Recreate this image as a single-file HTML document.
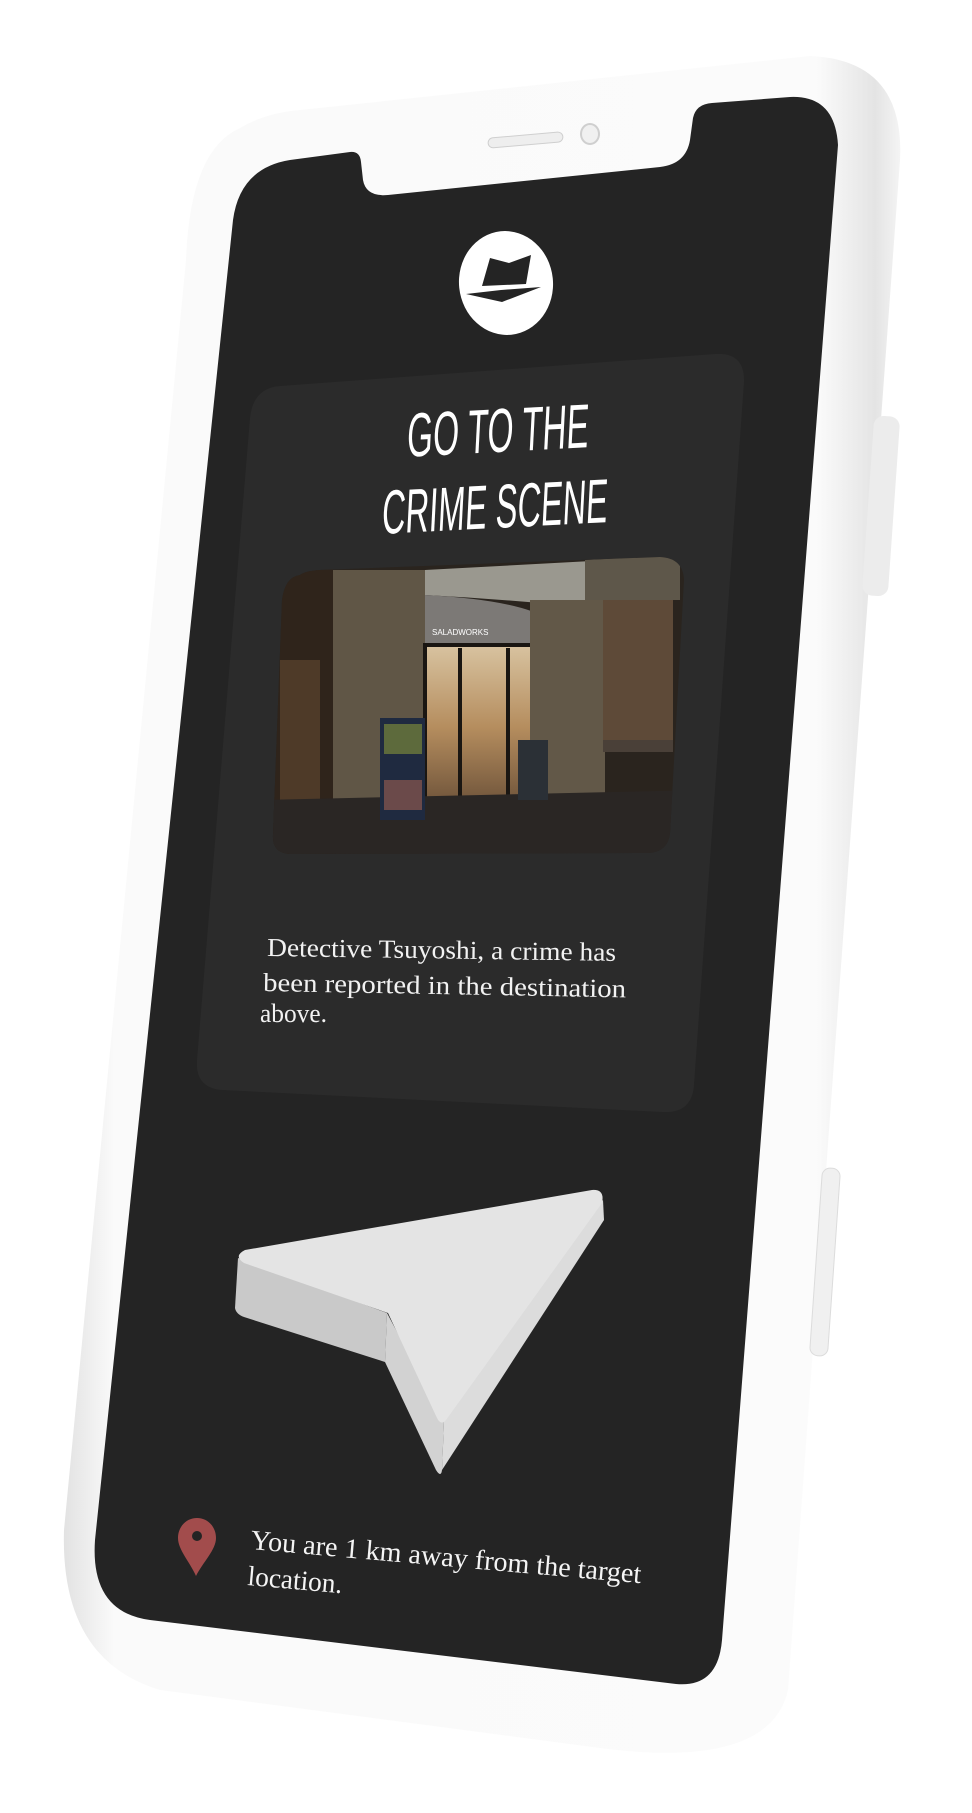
<!DOCTYPE html>
<html><head><meta charset="utf-8"><style>
html,body{margin:0;padding:0;background:#fff;width:972px;height:1813px;overflow:hidden}
svg{display:block}
</style></head><body>
<svg width="972" height="1813" viewBox="0 0 972 1813" xmlns="http://www.w3.org/2000/svg">
<defs>
<linearGradient id="body" x1="0" y1="0" x2="1" y2="0">
<stop offset="0" stop-color="#e2e2e2"/><stop offset="0.06" stop-color="#fafafa"/><stop offset="0.9" stop-color="#fbfbfb"/><stop offset="0.97" stop-color="#e4e4e4"/><stop offset="1" stop-color="#f4f4f4"/>
</linearGradient>
<linearGradient id="glow" x1="0" y1="0" x2="0" y2="1">
<stop offset="0" stop-color="#d8c3a0"/><stop offset="0.5" stop-color="#b58d5e"/><stop offset="1" stop-color="#6a5038"/>
</linearGradient>
<clipPath id="photo"><path d="M300 575 Q305 571 320 570 L660 557 Q683 558 684 580 L670 833 Q668 852 648 853 L290 854 Q272 853 273 835 L282 600 Q285 577 300 575 Z"/></clipPath>
</defs>

<path d="M240 128 Q190 150 186 260 L64 1530 Q60 1660 160 1690 L600 1748 Q770 1770 788 1690 L900 160 Q905 60 810 56 L300 110 Q265 113 240 128 Z" fill="url(#body)"/>
<rect x="868" y="416" width="26" height="180" rx="10" fill="#ececec" transform="rotate(4 881 506)"/>
<rect x="816" y="1168" width="18" height="188" rx="8" fill="#f0f0f0" stroke="#dcdcdc" transform="rotate(4 825 1262)"/>

<path d="M290 160 L350 152 Q360 151 361 162 L363 180 Q366 197 388 195 L660 167 Q686 164 690 140 L693 118 Q696 104 712 103 L790 97 Q835 95 838 145 L722 1640 Q718 1688 676 1684 L150 1620 Q90 1612 95 1540 L233 220 Q240 168 290 160 Z" fill="#242424"/>
<rect x="488" y="135" width="75" height="10" rx="5" fill="#eeeeee" stroke="#cfcfcf" transform="rotate(-5 525 140)"/>
<ellipse cx="590" cy="134" rx="9" ry="10" fill="#f0f0f0" stroke="#cfcfcf" stroke-width="2"/>

<ellipse cx="506" cy="283" rx="47" ry="52" fill="#ffffff" transform="rotate(-6 506 283)"/>
<path d="M490 258 L509 263 L531 255 L526 284 L482 286 Z" fill="#242424"/>
<path d="M466 294 L501 290 L541 287 L502 302 Z" fill="#242424"/>

<path d="M280 386 L715 354 Q745 352 744 382 L694 1085 Q692 1114 662 1112 L222 1090 Q195 1088 197 1060 L250 418 Q253 388 280 386 Z" fill="#2b2b2b"/>

<g fill="#ffffff" font-family="'Liberation Sans', sans-serif" font-size="62" text-anchor="middle">
<g transform="translate(497 452) rotate(-3) skewX(-6)"><text x="0" y="0" textLength="182" lengthAdjust="spacingAndGlyphs">GO TO THE</text></g>
<g transform="translate(494 528) rotate(-3) skewX(-6)"><text x="0" y="0" textLength="226" lengthAdjust="spacingAndGlyphs">CRIME SCENE</text></g>
</g>

<g clip-path="url(#photo)">
<rect x="260" y="550" width="440" height="310" fill="#2a241e"/>
<rect x="273" y="560" width="60" height="300" fill="#2f241b"/>
<rect x="280" y="660" width="40" height="140" fill="#4e3a28"/>
<path d="M333 570 L425 570 L425 853 L333 853 Z" fill="#605646"/>
<path d="M425 570 L610 560 L610 610 Q520 600 425 595 Z" fill="#9a988f"/>
<path d="M425 595 Q520 600 550 620 L550 650 L425 645 Z" fill="#7c7976"/>
<text x="432" y="635" fill="#fff" font-family="'Liberation Sans', sans-serif" font-size="8">SALADWORKS</text>
<rect x="425" y="645" width="125" height="165" fill="url(#glow)"/>
<rect x="425" y="645" width="125" height="165" fill="none" stroke="#1a1612" stroke-width="4"/>
<line x1="460" y1="648" x2="460" y2="808" stroke="#1a1612" stroke-width="4"/>
<line x1="508" y1="648" x2="508" y2="808" stroke="#1a1612" stroke-width="4"/>
<rect x="530" y="600" width="75" height="215" fill="#625848"/>
<path d="M585 560 L680 555 L680 600 L585 600 Z" fill="#5e574a"/>
<rect x="603" y="600" width="70" height="140" fill="#5e4a38"/>
<rect x="603" y="740" width="70" height="12" fill="#4a4038"/>
<path d="M260 800 L700 790 L700 860 L260 860 Z" fill="#2a2624"/>
<rect x="380" y="718" width="45" height="102" fill="#1f2a40"/>
<rect x="384" y="724" width="38" height="30" fill="#5d6a3c"/>
<rect x="384" y="780" width="38" height="30" fill="#6b4a4a"/>
<rect x="518" y="740" width="30" height="60" fill="#2b3036"/>
</g>

<g fill="#f2f2f2" font-family="'Liberation Serif', serif" font-size="26">
<text x="267" y="956" textLength="349" lengthAdjust="spacingAndGlyphs" transform="rotate(0.8 267 956)">Detective Tsuyoshi, a crime has</text>
<text x="263" y="991" textLength="363" lengthAdjust="spacingAndGlyphs" transform="rotate(1 263 991)">been reported in the destination</text>
<text x="260" y="1022" textLength="67" lengthAdjust="spacingAndGlyphs">above.</text>
</g>

<path d="M238 1258 L235 1308 Q236 1314 244 1317 L385 1362 L387 1313 Z" fill="#c9c9c9"/>
<path d="M387 1313 L385 1362 L436 1470 Q441 1478 442 1470 L444 1421 Z" fill="#d2d2d2"/>
<path d="M603 1200 L604 1220 L442 1470 L444 1421 Z" fill="#dcdcdc"/>
<path d="M245 1250 L592 1190 Q605 1189 602 1203 L446 1420 Q441 1426 437 1418 L388 1313 L244 1263 Q233 1256 245 1250 Z" fill="#e4e4e4"/>

<path d="M197 1518 C186 1518 178 1527 178 1538 C178 1550 190 1562 196 1576 C203 1562 216 1550 216 1538 C216 1527 208 1518 197 1518 Z" fill="#a24c4c"/>
<circle cx="197" cy="1536" r="5" fill="#242424"/>

<g fill="#f4f4f4" font-family="'Liberation Serif', serif" font-size="28">
<text x="250" y="1549" textLength="392" lengthAdjust="spacingAndGlyphs" transform="rotate(5 250 1549)">You are 1 km away from the target</text>
<text x="247" y="1585" textLength="95" lengthAdjust="spacingAndGlyphs" transform="rotate(5 247 1585)">location.</text>
</g>
</svg>
</body></html>
